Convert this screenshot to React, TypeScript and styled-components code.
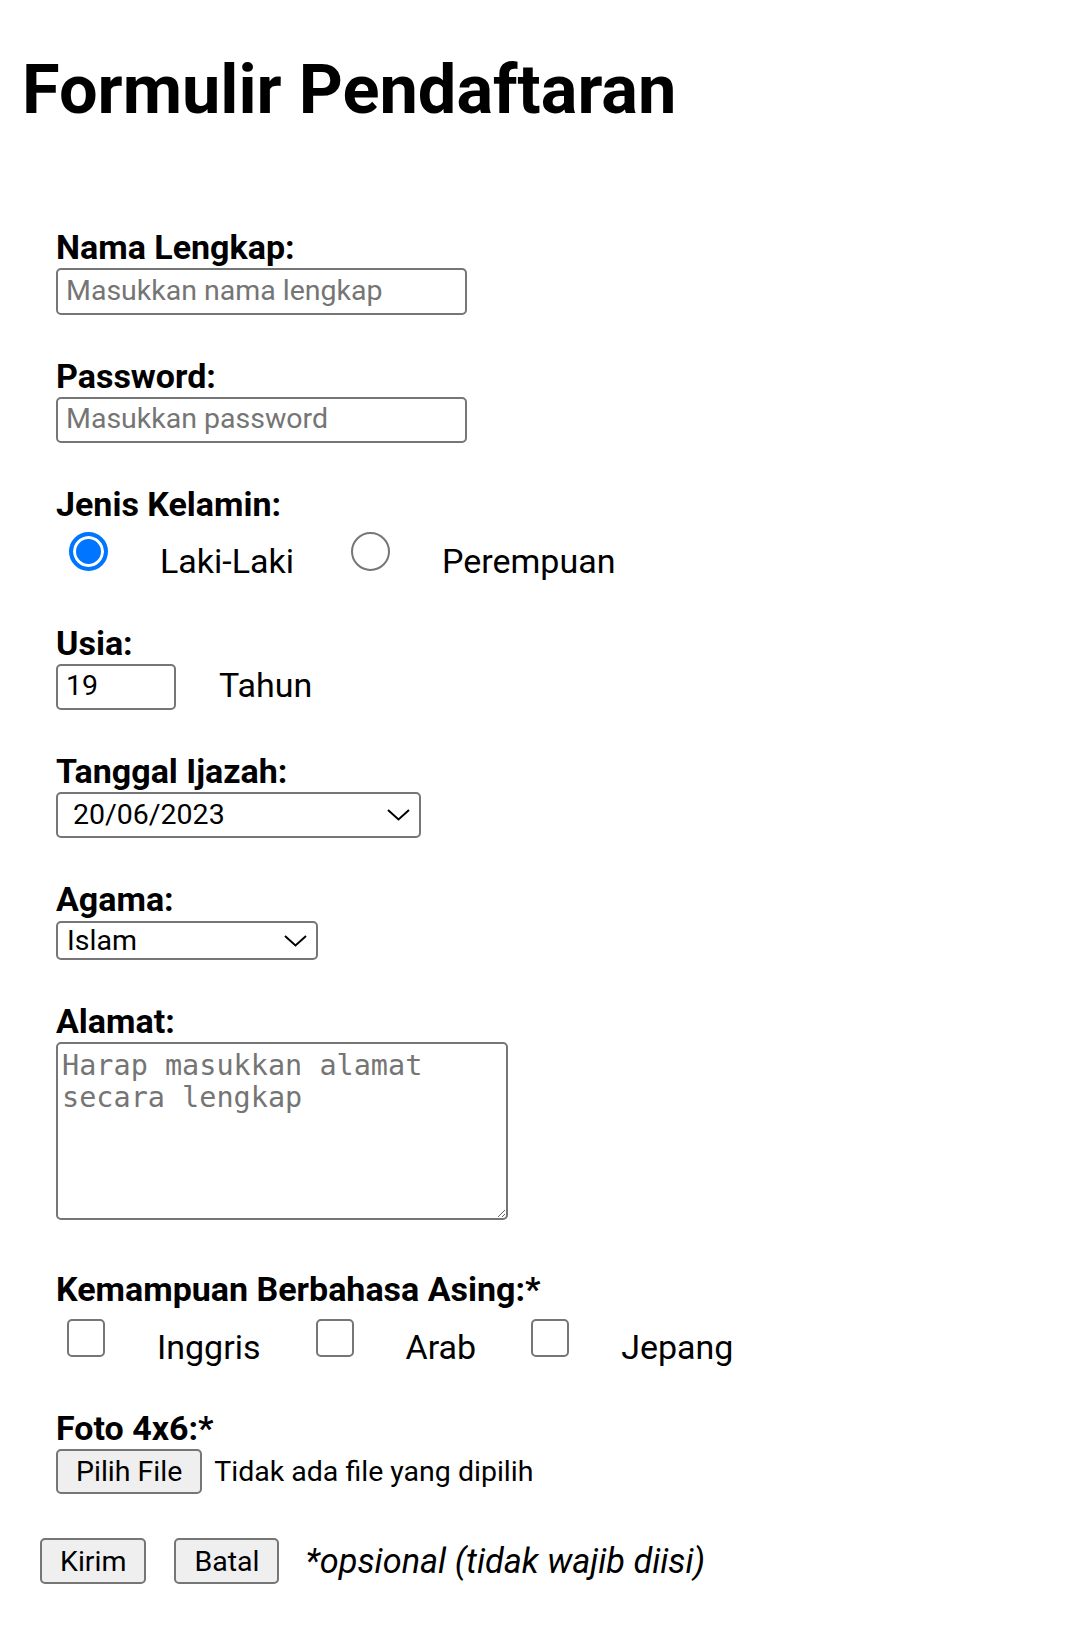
import React from "react";
import styled, { createGlobalStyle } from "styled-components";

const GlobalStyle = createGlobalStyle`
  html, body { margin: 0; padding: 0; background: #fff; }
  body { font-family: Roboto, "Noto Sans", Arial, sans-serif; color: #000; }
  * { box-sizing: border-box; }
`;

const Page = styled.main`
  padding-top: 50px;
  padding-bottom: 49px;
`;

const Title = styled.h1`
  margin: 0 0 0 22px;
  font-size: 68.5px;
  line-height: 80px;
  font-weight: 700;
`;

const Form = styled.form`
  display: flex;
  flex-direction: column;
  gap: 43px;
  margin-top: 99px;
  padding-left: 40px;
`;

const Field = styled.div<{ $extra?: number; $gap?: number }>`
  display: flex;
  flex-direction: column;
  align-items: flex-start;
  gap: ${(p) => p.$gap ?? 3}px;
  padding-left: 16px;
  margin-bottom: ${(p) => p.$extra ?? 0}px;
`;

const Label = styled.label`
  font-size: 34px;
  line-height: 36px;
  font-weight: 700;
`;

const TextInput = styled.input<{ $w: number; $h?: number }>`
  width: ${(p) => p.$w}px;
  height: ${(p) => p.$h ?? 47}px;
  border: 2px solid #767676;
  border-radius: 5px;
  padding: 0 0 3px 8px;
  font: 400 28.5px Roboto, sans-serif;
  color: #000;
  background: #fff;
  outline: none;
  &::placeholder {
    color: #757575;
  }
`;

const ChoiceRow = styled.div`
  display: flex;
  align-items: flex-start;
  height: 60px;
`;

const Radio = styled.input`
  appearance: none;
  margin: 10px 0 0 13px;
  width: 39px;
  height: 39px;
  border-radius: 50%;
  border: 2px solid #767676;
  background: #fff;
  flex: none;
  &:checked {
    border: 4px solid #0075ff;
    background: #0075ff;
    box-shadow: inset 0 0 0 3px #fff;
  }
`;

const Checkbox = styled.input`
  appearance: none;
  margin: 12px 0 0 11px;
  width: 38px;
  height: 38px;
  border-radius: 5px;
  border: 2px solid #767676;
  background: #fff;
  flex: none;
`;

const ChoiceText = styled.span<{ $top: number }>`
  font-size: 34px;
  line-height: 40px;
  margin: ${(p) => p.$top}px 44px 0 52px;
  white-space: nowrap;
`;

const InlineRow = styled.div`
  display: flex;
  align-items: flex-start;
`;

const SuffixText = styled.span`
  font-size: 34px;
  line-height: 40px;
  margin: 1px 0 0 43px;
`;

const SelectBox = styled.div<{ $w: number; $h: number; $pl: number }>`
  display: flex;
  align-items: center;
  width: ${(p) => p.$w}px;
  height: ${(p) => p.$h}px;
  border: 2px solid #767676;
  border-radius: 5px;
  padding: 0 9px 0 ${(p) => p.$pl}px;
  background: #fff;
`;

const NativeSelect = styled.select`
  appearance: none;
  border: none;
  background: transparent;
  font: 400 28.5px Roboto, sans-serif;
  color: #000;
  flex: 1;
  padding: 0;
  outline: none;
`;

const DateText = styled.span`
  flex: 1;
  font-size: 28.5px;
  line-height: 32px;
`;

const AddressArea = styled.textarea`
  width: 452px;
  height: 178px;
  border: 2px solid #767676;
  border-radius: 5px;
  padding: 6px 4px;
  font: 400 28.5px/32px "DejaVu Sans Mono", "Liberation Mono", monospace;
  color: #000;
  outline: none;
  &::placeholder {
    color: #757575;
  }
`;

const FileRow = styled.div`
  display: flex;
  align-items: center;
  gap: 12px;
`;

const GreyButton = styled.button<{ $h: number }>`
  height: ${(p) => p.$h}px;
  padding: 0 18px;
  background: #efefef;
  border: 2px solid #767676;
  border-radius: 5px;
  font: 400 28.5px Roboto, sans-serif;
  color: #000;
`;

const FileStatus = styled.span`
  font-size: 28.5px;
  line-height: 33px;
`;

const ActionRow = styled.div`
  display: flex;
  align-items: center;
  gap: 28px;
  margin-top: 1px;
`;

const Note = styled.span`
  font-size: 34.3px;
  line-height: 40px;
  font-style: italic;
  margin-left: -2px;
`;

const Chevron = () => (
  <svg width="23" height="12" viewBox="0 0 23 12" fill="none">
    <polyline points="1,1 11.5,10.5 22,1" stroke="#000" strokeWidth="2" />
  </svg>
);

export default function App() {
  return (
    <Page>
      <GlobalStyle />
      <Title>Formulir Pendaftaran</Title>
      <Form onSubmit={(e) => e.preventDefault()}>
        <Field>
          <Label htmlFor="nama">Nama Lengkap:</Label>
          <TextInput id="nama" $w={411} placeholder="Masukkan nama lengkap" />
        </Field>
        <Field>
          <Label htmlFor="pass">Password:</Label>
          <TextInput id="pass" type="password" $w={411} $h={46} placeholder="Masukkan password" />
        </Field>
        <Field $gap={0}>
          <Label>Jenis Kelamin:</Label>
          <ChoiceRow>
            <Radio type="radio" name="jk" defaultChecked />
            <ChoiceText $top={19}>Laki-Laki</ChoiceText>
            <Radio type="radio" name="jk" />
            <ChoiceText $top={19}>Perempuan</ChoiceText>
          </ChoiceRow>
        </Field>
        <Field>
          <Label htmlFor="usia">Usia:</Label>
          <InlineRow>
            <TextInput id="usia" $w={120} $h={46} defaultValue="19" />
            <SuffixText>Tahun</SuffixText>
          </InlineRow>
        </Field>
        <Field>
          <Label>Tanggal Ijazah:</Label>
          <SelectBox $w={365} $h={46} $pl={15}>
            <DateText>20/06/2023</DateText>
            <Chevron />
          </SelectBox>
        </Field>
        <Field $gap={4}>
          <Label htmlFor="agama">Agama:</Label>
          <SelectBox $w={262} $h={39} $pl={9}>
            <NativeSelect id="agama" defaultValue="Islam">
              <option>Islam</option>
              <option>Kristen</option>
              <option>Katolik</option>
              <option>Hindu</option>
              <option>Buddha</option>
              <option>Konghucu</option>
            </NativeSelect>
            <Chevron />
          </SelectBox>
        </Field>
        <Field $extra={8}>
          <Label htmlFor="alamat">Alamat:</Label>
          <AddressArea id="alamat" placeholder="Harap masukkan alamat secara lengkap" />
        </Field>
        <Field $gap={0}>
          <Label>Kemampuan Berbahasa Asing:*</Label>
          <ChoiceRow>
            <Checkbox type="checkbox" />
            <ChoiceText $top={20}>Inggris</ChoiceText>
            <Checkbox type="checkbox" />
            <ChoiceText $top={20}>Arab</ChoiceText>
            <Checkbox type="checkbox" />
            <ChoiceText $top={20}>Jepang</ChoiceText>
          </ChoiceRow>
        </Field>
        <Field>
          <Label>Foto 4x6:*</Label>
          <FileRow>
            <GreyButton type="button" $h={45}>Pilih File</GreyButton>
            <FileStatus>Tidak ada file yang dipilih</FileStatus>
          </FileRow>
        </Field>
        <ActionRow>
          <GreyButton type="submit" $h={46}>Kirim</GreyButton>
          <GreyButton type="reset" $h={46}>Batal</GreyButton>
          <Note>*opsional (tidak wajib diisi)</Note>
        </ActionRow>
      </Form>
    </Page>
  );
}
